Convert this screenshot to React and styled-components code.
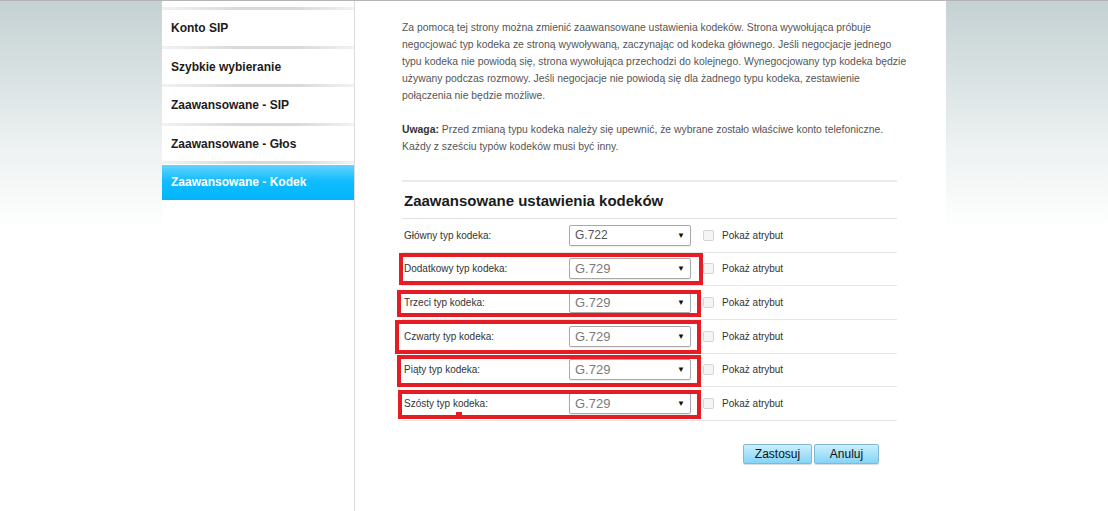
import React from 'react'
import styled, { createGlobalStyle } from 'styled-components'

const GlobalStyle = createGlobalStyle`
    html, body {
        margin: 0;
        padding: 0;
        height: 100%;
    }
    body {
        background: linear-gradient(#c4d1d3 0, #eef2f2 150px, #ffffff 230px) no-repeat;
        background-color: #fff;
        border-top: 1px solid #b4b4b4;
        box-sizing: border-box;
        font-family: "Liberation Sans", Arial, sans-serif;
    }
`

const Page = styled.div`
    display: flex;
    justify-content: center;
    min-height: 510px;
`

const Panel = styled.div`
    display: flex;
    width: 784px;
    background: #fff;
`

// Sidebar
const Sidebar = styled.nav`
    flex: 0 0 192px;
    padding-top: 6px;
    border-right: 1px solid #dcdcdc;
`

const NavItem = styled.div`
    display: flex;
    flex-direction: column;
    height: 38.5px;

    &::before {
        content: '';
        height: 3px;
        margin-bottom: 1px;
        background: linear-gradient(to right, #f2f2f2, #d9d9d9 40%, #d9d9d9 70%, #f2f2f2);
    }
`

const NavLabel = styled.div`
    flex: 1;
    display: flex;
    align-items: center;
    padding-left: 9px;
    font-size: 12px;
    font-weight: bold;
    color: ${p => p.active ? '#fff' : '#1e1a1c'};
    background: ${p => p.active ? 'linear-gradient(#62d4ff 0, #12bcff 45%, #00b6f8 100%)' : 'transparent'};
`

// Content
const Content = styled.main`
    flex: 1;
    min-width: 0;
    padding: 18px 49px 0 47px;
    color: #555;
    font-size: 10px;
`

const Text = styled.p`
    margin: 0 0 17px;
    line-height: 17px;
    font-size: 10.4px;
    white-space: nowrap;

    b {
        color: #333;
    }
`

const Section = styled.section`
    margin-top: 25px;
    border-top: 2px solid #ebebeb;
`

const Heading = styled.h2`
    margin: 0;
    height: 36px;
    display: flex;
    align-items: center;
    padding-left: 2px;
    font-size: 15px;
    font-weight: bold;
    color: #1b1b1b;
    border-bottom: 1px solid #e2e2e2;
`

const Row = styled.div`
    position: relative;
    display: grid;
    grid-template-columns: 167px 122px 12px 11px 8px auto;
    align-items: center;
    height: 33.67px;
    box-sizing: border-box;
    border-bottom: 1px solid #e6e6e6;
`

const Label = styled.span`
    padding-left: 2px;
    color: #333;
`

const Select = styled.div`
    grid-column: 2;
    height: 21px;
    box-sizing: border-box;
    display: flex;
    align-items: center;
    justify-content: space-between;
    padding: 0 5px 0 5px;
    border: 1px solid #a9a9a9;
    border-radius: 2px;
    box-shadow: 0 1px 1px rgba(0, 0, 0, 0.08);
    background: #fff;
    font-size: ${p => p.primary ? '12px' : '13px'};
    color: ${p => p.primary ? '#555' : '#7a7a7a'};

    &::after {
        content: '▼';
        font-size: 8px;
        color: #111;
    }
`

const Check = styled.input.attrs({ type: 'checkbox' })`
    grid-column: 4;
    appearance: none;
    margin: 0;
    width: 11px;
    height: 11px;
    border: 1px solid #d4d4d4;
    border-radius: 2px;
    background: #f5f5f5;
`

const CheckLabel = styled.span`
    grid-column: 6;
    color: #333;
`

const Marker = styled.div`
    position: absolute;
    box-sizing: border-box;
    border: 4px solid #e51c24;
    pointer-events: none;

    &::after {
        content: '';
        display: ${p => p.nub ? 'block' : 'none'};
        position: absolute;
        left: ${p => p.nub}px;
        bottom: 0;
        width: 6px;
        height: 3px;
        background: #e51c24;
    }
`

const Actions = styled.div`
    display: flex;
    justify-content: flex-end;
    gap: 2px;
    padding: 23px 18px 0 0;
`

const Button = styled.button`
    height: 20px;
    width: ${p => p.w}px;
    padding: 0;
    font-family: "Liberation Sans", Arial, sans-serif;
    font-size: 12px;
    color: #111;
    border: 1px solid #82b8d2;
    border-radius: 2px;
    background: linear-gradient(#cdeffd, #a6e2fb 50%, #86d4f7);
    box-shadow: 0 1px 1px rgba(0, 0, 0, 0.15);
`

const navItems = ['Konto SIP', 'Szybkie wybieranie', 'Zaawansowane - SIP', 'Zaawansowane - Głos', 'Zaawansowane - Kodek']

const intro = [
    'Za pomocą tej strony można zmienić zaawansowane ustawienia kodeków. Strona wywołująca próbuje',
    'negocjować typ kodeka ze stroną wywoływaną, zaczynając od kodeka głównego. Jeśli negocjacje jednego',
    'typu kodeka nie powiodą się, strona wywołująca przechodzi do kolejnego. Wynegocjowany typ kodeka będzie',
    'używany podczas rozmowy. Jeśli negocjacje nie powiodą się dla żadnego typu kodeka, zestawienie',
    'połączenia nie będzie możliwe.',
]

const rows = [
    { label: 'Główny typ kodeka:', value: 'G.722', primary: true },
    { label: 'Dodatkowy typ kodeka:', value: 'G.729', mark: { top: 0, left: -3, width: 304, height: 32 } },
    { label: 'Trzeci typ kodeka:', value: 'G.729', mark: { top: 4, left: -5, width: 304, height: 27 } },
    { label: 'Czwarty typ kodeka:', value: 'G.729', mark: { top: 0, left: -7, width: 306, height: 34 } },
    { label: 'Piąty typ kodeka:', value: 'G.729', mark: { top: 1, left: -5, width: 304, height: 32 } },
    { label: 'Szósty typ kodeka:', value: 'G.729', mark: { top: 3, left: -4, width: 303, height: 29 }, nub: 54 },
]

export default function App() {
    return (
        <Page>
            <GlobalStyle />
            <Panel>
                <Sidebar>
                    {navItems.map(item => (
                        <NavItem key={item}>
                            <NavLabel active={item === 'Zaawansowane - Kodek'}>{item}</NavLabel>
                        </NavItem>
                    ))}
                </Sidebar>
                <Content>
                    <Text>
                        {intro.map((line, i) => (
                            <React.Fragment key={i}>{line}{i < intro.length - 1 && <br />}</React.Fragment>
                        ))}
                    </Text>
                    <Text>
                        <b>Uwaga:</b> Przed zmianą typu kodeka należy się upewnić, że wybrane zostało właściwe konto telefoniczne.
                        <br />
                        Każdy z sześciu typów kodeków musi być inny.
                    </Text>
                    <Section>
                        <Heading>Zaawansowane ustawienia kodeków</Heading>
                        {rows.map(row => (
                            <Row key={row.label}>
                                <Label>{row.label}</Label>
                                <Select primary={row.primary}>{row.value}</Select>
                                <Check />
                                <CheckLabel>Pokaż atrybut</CheckLabel>
                                {row.mark && <Marker style={row.mark} nub={row.nub} />}
                            </Row>
                        ))}
                        <Actions>
                            <Button w={69}>Zastosuj</Button>
                            <Button w={65}>Anuluj</Button>
                        </Actions>
                    </Section>
                </Content>
            </Panel>
        </Page>
    )
}
